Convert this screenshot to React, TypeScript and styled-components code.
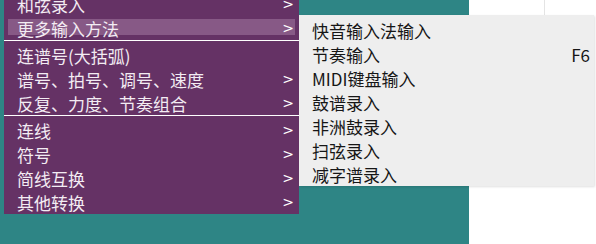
import styled, { createGlobalStyle } from "styled-components";

const GlobalStyle = createGlobalStyle`
  html, body {
    margin: 0;
    padding: 0;
    background: #ffffff;
    overflow: hidden;
  }
  body {
    font-family: "Noto Sans CJK SC", "Noto Sans", sans-serif;
  }
`;

const Page = styled.div`
  position: relative;
  display: flex;
  width: 596px;
  height: 244px;
  overflow: hidden;
`;

const Canvas = styled.div`
  width: 469px;
  height: 100%;
  background: #2e8585;
`;

const Blank = styled.div`
  flex: 1;
  display: flex;
  align-items: flex-start;
  background: #ffffff;
`;

const Divider = styled.div`
  width: 75px;
  height: 15px;
  border-right: 1px solid #e4e4e4;
`;

const MainMenu = styled.ul`
  position: absolute;
  left: 4px;
  top: -8px;
  width: 295px;
  margin: 0;
  padding: 0;
  list-style: none;
  background: #653265;
`;

const Item = styled.li<{ $active?: boolean }>`
  position: relative;
  display: flex;
  align-items: center;
  justify-content: space-between;
  height: 24px;
  padding: 0 5px 0 13px;
  font-size: 17px;
  color: #f3ecf3;
  white-space: nowrap;

  &::before {
    content: "";
    position: absolute;
    left: 4px;
    right: 4px;
    top: 3px;
    bottom: 5px;
    background: ${(p) => (p.$active ? "#875986" : "transparent")};
  }

  & > span {
    position: relative;
  }
`;

const Arrow = styled.span`
  font-family: "DejaVu Sans", sans-serif;
  font-size: 14px;
  color: #ffffff;
`;

const Separator = styled.li`
  height: 2px;
  border-top: 1px solid #ffffff;
`;

const SubMenu = styled.ul`
  position: absolute;
  left: 299px;
  top: 15px;
  width: 295px;
  margin: 0;
  padding: 3px 0 0;
  list-style: none;
  background: #eeeeee;
  box-shadow: 1px 1px 2px rgba(0, 0, 0, 0.12);
`;

const SubItem = styled.li`
  display: flex;
  align-items: center;
  justify-content: space-between;
  height: 24px;
  padding: 0 4px 0 13px;
  font-size: 17px;
  color: #161616;
  white-space: nowrap;
`;

const Shortcut = styled.span`
  font-size: 17px;
  color: #161616;
`;

type Entry = { label: string; sub?: boolean; active?: boolean } | "sep";

const mainEntries: Entry[] = [
  { label: "和弦录入", sub: true },
  { label: "更多输入方法", sub: true, active: true },
  "sep",
  { label: "连谱号(大括弧)" },
  { label: "谱号、拍号、调号、速度", sub: true },
  { label: "反复、力度、节奏组合", sub: true },
  "sep",
  { label: "连线", sub: true },
  { label: "符号", sub: true },
  { label: "简线互换", sub: true },
  { label: "其他转换", sub: true },
];

const subEntries = [
  { label: "快音输入法输入" },
  { label: "节奏输入", key: "F6" },
  { label: "MIDI键盘输入" },
  { label: "鼓谱录入" },
  { label: "非洲鼓录入" },
  { label: "扫弦录入" },
  { label: "减字谱录入" },
];

export default function App() {
  return (
    <Page>
      <GlobalStyle />
      <Canvas />
      <Blank>
        <Divider />
      </Blank>
      <MainMenu>
        {mainEntries.map((e, i) =>
          e === "sep" ? (
            <Separator key={i} />
          ) : (
            <Item key={i} $active={e.active}>
              <span>{e.label}</span>
              {e.sub && <Arrow>&gt;</Arrow>}
            </Item>
          )
        )}
      </MainMenu>
      <SubMenu>
        {subEntries.map((e) => (
          <SubItem key={e.label}>
            <span>{e.label}</span>
            {e.key && <Shortcut>{e.key}</Shortcut>}
          </SubItem>
        ))}
      </SubMenu>
    </Page>
  );
}
